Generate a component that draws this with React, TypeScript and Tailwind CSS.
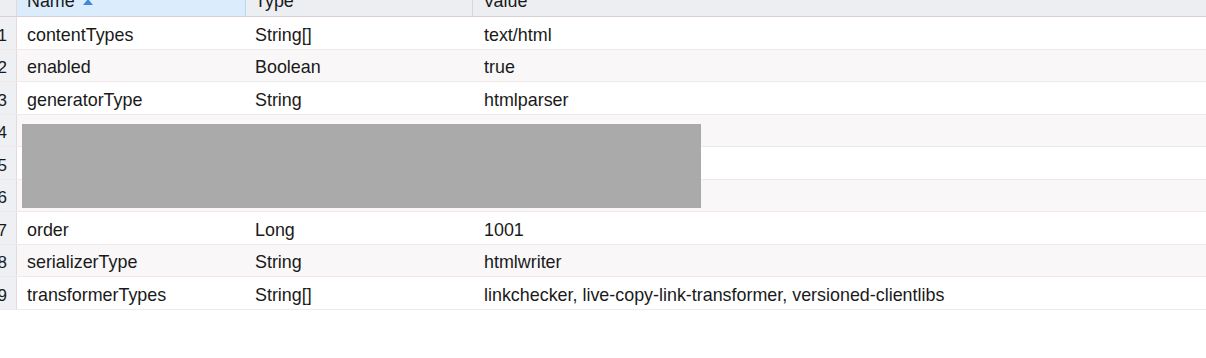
const rows: [string, string, string][] = [
  ["contentTypes", "String[]", "text/html"],
  ["enabled", "Boolean", "true"],
  ["generatorType", "String", "htmlparser"],
  ["", "", ""],
  ["", "", ""],
  ["", "", ""],
  ["order", "Long", "1001"],
  ["serializerType", "String", "htmlwriter"],
  ["transformerTypes", "String[]", "linkchecker, live-copy-link-transformer, versioned-clientlibs"],
];

export default function App() {
  return (
    <div className="w-[1206px] h-[358px] overflow-hidden bg-white font-['Liberation_Sans',Arial,sans-serif] text-[17.9px] text-[#1a1a1a]">
      <div className="relative -mt-[17px]">
        {/* header */}
        <div className="flex h-[34px] border-b border-[#dccfd4]">
          <div className="w-[17px] bg-[#eceef2] border-r border-[#e2d8dc]" />
          <div className="w-[229px] flex items-center gap-[8px] pl-[10px] pt-[3px] bg-[#dbedfc] border-r border-[#b9d7f0]">
            <span>Name</span>
            <svg width="10" height="6" viewBox="0 0 10 6" className="mt-[2px]">
              <path d="M0 6 L5 0 L10 6 Z" fill="#3d8bd8" />
            </svg>
          </div>
          <div className="w-[227px] flex items-center pl-[9px] pt-[3px] bg-[#eceef2] border-r border-[#d6d6dc]">Type</div>
          <div className="flex-1 flex items-center pl-[10px] pt-[3px] bg-[#eceef2]">Value</div>
        </div>

        {/* body */}
        {rows.map((r, i) => (
          <div
            key={i}
            className={`flex h-[32.5px] border-b border-[#f1e8ea] ${i % 2 === 1 ? "bg-[#f9f7f8]" : "bg-white"}`}
          >
            <div className="w-[17px] shrink-0 flex items-center justify-end pr-[9px] pt-[5px] bg-[#eef0f4] border-r border-[#e6dadd] text-[17px]">
              {i + 1}
            </div>
            <div className="w-[229px] shrink-0 flex items-center pl-[10px] pt-[5px]">{r[0]}</div>
            <div className="w-[228px] shrink-0 flex items-center pl-[9px] pt-[5px]">{r[1]}</div>
            <div className="flex-1 flex items-center pl-[10px] pt-[5px] whitespace-nowrap">{r[2]}</div>
          </div>
        ))}

        {/* redacted block */}
        <div className="absolute left-[22px] top-[141px] w-[679px] h-[84px] bg-[#aaaaaa]" />
      </div>
    </div>
  );
}
